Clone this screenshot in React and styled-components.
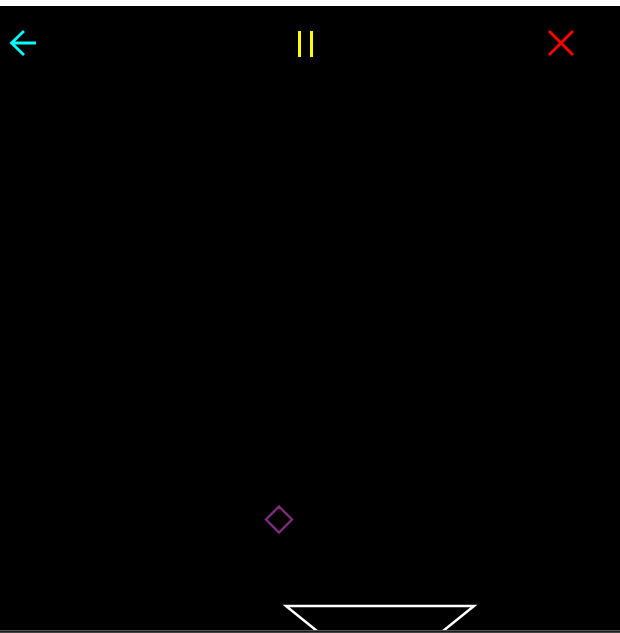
import React from "react";
import styled, { createGlobalStyle } from "styled-components";

const GlobalStyle = createGlobalStyle`
  html, body {
    margin: 0;
    padding: 0;
    background: #fff;
    font-family: "Liberation Sans", Arial, sans-serif;
  }
`;

const Page = styled.div`
  padding-top: 6px;
`;

const Screen = styled.div`
  position: relative;
  height: 624px;
  background: #000;
  display: flex;
  flex-direction: column;
  overflow: hidden;
`;

const TopBar = styled.div`
  display: grid;
  grid-template-columns: 38px 244px 38px 1fr 38px;
  align-items: center;
  padding: 18px 40px 0 4px;
`;

const IconButton = styled.button`
  grid-column: ${(props) => props.$col};
  width: 38px;
  height: 38px;
  padding: 0;
  border: 0;
  background: transparent;
  cursor: pointer;
  display: block;

  svg {
    display: block;
  }
`;

const Playfield = styled.div`
  flex: 1;
`;

const Piece = styled.svg`
  position: absolute;
  left: ${(props) => props.$x}px;
  top: ${(props) => props.$y}px;
  overflow: visible;
`;

const Floor = styled.div`
  height: 3px;
  background: linear-gradient(
    to bottom,
    #555 0 1px,
    #1c1c1c 1px 2px,
    #444 2px 3px
  );
`;

const BackIcon = () => (
  <svg width="38" height="38" viewBox="0 0 38 38">
    <path
      d="M32 19 H7.5 M20 7 L7.5 19 L20 31"
      fill="none"
      stroke="#00ffff"
      strokeWidth="2.8"
    />
  </svg>
);

const PauseIcon = () => (
  <svg width="38" height="38" viewBox="0 0 38 38">
    <rect x="12" y="7" width="3" height="26" fill="#ffff00" />
    <rect x="24" y="7" width="3" height="26" fill="#ffff00" />
  </svg>
);

const CloseIcon = () => (
  <svg width="38" height="38" viewBox="0 0 38 38">
    <path
      d="M7 7 L31 31 M31 7 L7 31"
      fill="none"
      stroke="#ff0000"
      strokeWidth="3"
    />
  </svg>
);

const App = () => {
  return (
    <Page>
      <GlobalStyle />
      <Screen>
        <TopBar>
          <IconButton $col={1} aria-label="Back">
            <BackIcon />
          </IconButton>
          <IconButton $col={3} aria-label="Pause">
            <PauseIcon />
          </IconButton>
          <IconButton $col={5} aria-label="Close">
            <CloseIcon />
          </IconButton>
        </TopBar>
        <Playfield />
        <Piece $x={264} $y={499} width="30" height="30" viewBox="0 0 30 30">
          <polygon
            points="15,1.5 28,14.5 15,27.5 2,14.5"
            fill="none"
            stroke="#7b2d7b"
            strokeWidth="2.4"
          />
        </Piece>
        <Piece $x={284} $y={598} width="192" height="28" viewBox="0 0 192 28">
          <polyline
            points="33,27 2,2 190,2 159,27"
            fill="none"
            stroke="#fff"
            strokeWidth="2.5"
          />
        </Piece>
      </Screen>
      <Floor />
    </Page>
  );
};

export default App;
